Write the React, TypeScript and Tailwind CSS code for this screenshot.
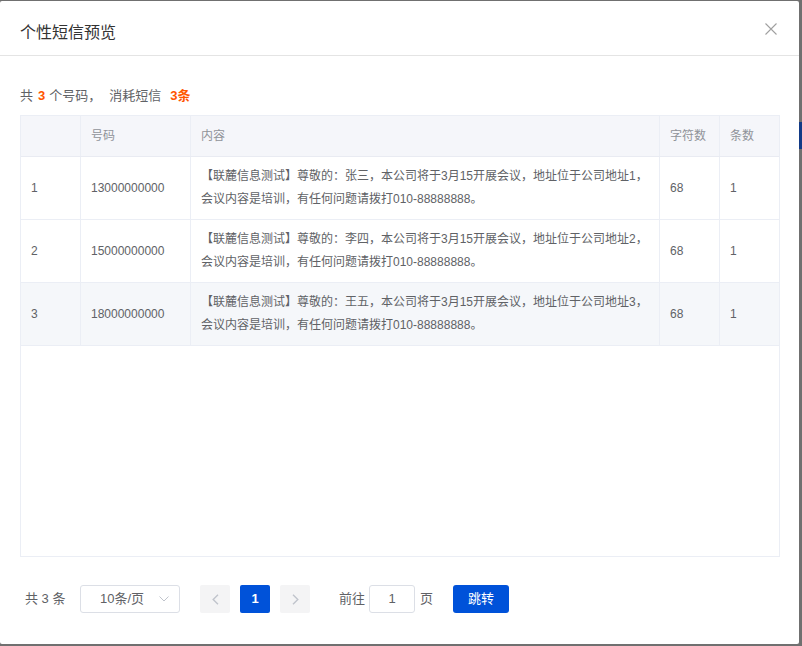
import React from "react";

const rows = [
  { no: "1", phone: "13000000000", name: "张三", addr: "1" },
  { no: "2", phone: "15000000000", name: "李四", addr: "2" },
  { no: "3", phone: "18000000000", name: "王五", addr: "3" },
];

function CloseIcon() {
  return (
    <svg width="12" height="12" viewBox="0 0 12 12" fill="none">
      <path d="M0.5 0.5L11.5 11.5M11.5 0.5L0.5 11.5" stroke="#a0a0a0" strokeWidth="1.1" />
    </svg>
  );
}

function Chevron({ dir, color }: { dir: "left" | "right" | "down"; color: string }) {
  if (dir === "down") {
    return (
      <svg width="10" height="6" viewBox="0 0 10 6" fill="none">
        <path d="M0.5 0.5L5 5L9.5 0.5" stroke={color} strokeWidth="1" />
      </svg>
    );
  }
  return (
    <svg width="7" height="11" viewBox="0 0 7 11" fill="none">
      {dir === "left" ? (
        <path d="M6 0.8L1.2 5.5L6 10.2" stroke={color} strokeWidth="1.4" />
      ) : (
        <path d="M1 0.8L5.8 5.5L1 10.2" stroke={color} strokeWidth="1.4" />
      )}
    </svg>
  );
}

export default function App() {
  return (
    <div className="w-[802px] h-[646px] bg-[#707070] flex pt-[1px] overflow-hidden font-['Liberation_Sans','Noto_Sans_CJK_SC',sans-serif]">
      <div className="w-[799px] h-[643px] bg-white rounded-[2px] flex flex-col shrink-0">
        {/* header */}
        <div className="h-[55px] border-b border-[#e4e4e4] flex items-start justify-between pl-5 pr-[22px] pt-[20px] shrink-0">
          <div className="text-[16px] leading-[24px] text-[#333333]">个性短信预览</div>
          <div className="mt-[2px]">
            <CloseIcon />
          </div>
        </div>

        {/* body */}
        <div className="px-5 flex flex-col">
          <div className="mt-[30px] h-[20px] leading-[20px] text-[13px] text-[#606266] whitespace-nowrap flex items-center">
            <span>共</span>
            <span className="ml-[5px] mr-[4px] text-[#ff5500] font-bold">3</span>
            <span>个号码，</span>
            <span className="ml-[8px]">消耗短信</span>
            <span className="ml-[9px] text-[#ff5500] font-bold">3条</span>
          </div>

          <div className="mt-[9px] w-[760px] h-[442px] border border-[#ebeef5] flex flex-col text-[12px]">
            <div className="grid grid-cols-[60px_110px_469px_60px_59px] h-[41px] bg-[#f5f6fa] border-b border-[#e9ebf2] text-[#909399]">
              <div className="border-r border-[#ebeef5]" />
              <div className="border-r border-[#ebeef5] flex items-center pl-[10px]">号码</div>
              <div className="border-r border-[#ebeef5] flex items-center pl-[10px]">内容</div>
              <div className="border-r border-[#ebeef5] flex items-center pl-[10px]">字符数</div>
              <div className="flex items-center pl-[10px]">条数</div>
            </div>
            {rows.map((r, i) => (
              <div
                key={r.no}
                className={`grid grid-cols-[60px_110px_469px_60px_59px] h-[63px] border-b border-[#ebeef5] text-[#606266] ${
                  i === 2 ? "bg-[#f5f7fa]" : "bg-white"
                }`}
              >
                <div className="border-r border-[#ebeef5] flex items-center pl-[10px]">{r.no}</div>
                <div className="border-r border-[#ebeef5] flex items-center pl-[10px]">{r.phone}</div>
                <div className="border-r border-[#ebeef5] flex flex-col justify-center pl-[10px] leading-[23px] whitespace-nowrap">
                  <div>{`【联麓信息测试】尊敬的：${r.name}，本公司将于3月15开展会议，地址位于公司地址${r.addr}，`}</div>
                  <div>会议内容是培训，有任何问题请拨打010-88888888。</div>
                </div>
                <div className="border-r border-[#ebeef5] flex items-center pl-[10px]">68</div>
                <div className="flex items-center pl-[10px]">1</div>
              </div>
            ))}
          </div>

          {/* pagination */}
          <div className="mt-[28px] h-[28px] flex items-center pl-[5px] text-[13px] text-[#606266]">
            <span className="w-[40px] whitespace-nowrap">共 3 条</span>
            <div className="ml-[15px] w-[100px] h-[28px] border border-[#dcdfe6] rounded-[3px] flex items-center justify-between pl-[19px] pr-[10px]">
              <span className="whitespace-nowrap">10条/页</span>
              <Chevron dir="down" color="#c0c4cc" />
            </div>
            <div className="ml-[20px] w-[30px] h-[28px] bg-[#f4f4f5] rounded-[2px] flex items-center justify-center">
              <Chevron dir="left" color="#c0c4cc" />
            </div>
            <div className="ml-[10px] w-[30px] h-[28px] bg-[#0052d9] rounded-[2px] flex items-center justify-center text-white font-bold">
              1
            </div>
            <div className="ml-[10px] w-[30px] h-[28px] bg-[#f4f4f5] rounded-[2px] flex items-center justify-center">
              <Chevron dir="right" color="#c0c4cc" />
            </div>
            <span className="ml-[29px] w-[26px] whitespace-nowrap">前往</span>
            <div className="ml-[4px] w-[46px] h-[28px] border border-[#dcdfe6] rounded-[3px] flex items-center justify-center">
              1
            </div>
            <span className="ml-[5px] w-[13px]">页</span>
            <div className="ml-[20px] w-[56px] h-[28px] bg-[#0052d9] rounded-[3px] flex items-center justify-center text-white">
              跳转
            </div>
          </div>
        </div>
      </div>
      <div className="w-[3px] flex flex-col shrink-0">
        <div className="h-[121px]" />
        <div className="h-[27px] bg-[#123a86]" />
      </div>
    </div>
  );
}
